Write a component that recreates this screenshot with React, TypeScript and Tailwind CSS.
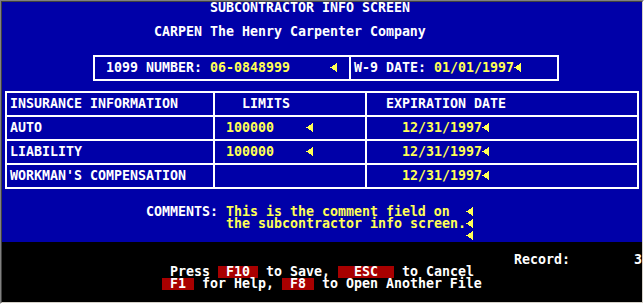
import React from "react";

const Arrow = () => (
  <svg width="8" height="12" viewBox="0 0 8 12" className="inline-block align-top" shapeRendering="crispEdges">
    <polygon points="0.5,5.5 7,1 7,10" fill="#ffff55" />
  </svg>
);

const Y = ({ children }: { children: React.ReactNode }) => <span className="text-[#ffff55]">{children}</span>;

const Key = ({ children }: { children: React.ReactNode }) => (
  <span className="inline-block h-3 align-top bg-[#a80000] text-white">{children}</span>
);

const Row = ({ className = "", children }: { className?: string; children?: React.ReactNode }) => (
  <div className={`h-3 whitespace-pre leading-[12px] ${className}`}>{children}</div>
);

export default function App() {
  return (
    <div
      className="w-[644px] h-[304px] border border-t-[#808080] border-l-[#808080] border-r-white border-b-white"
      style={{ fontFamily: '"DejaVu Sans Mono", monospace' }}
    >
      <div className="w-[642px] h-[302px] border border-t-[#404040] border-l-[#404040] border-r-[#d4d0c8] border-b-[#d4d0c8] flex flex-col text-[13.29px] font-bold text-white">
        <div className="h-[240px] bg-[#0000a8] flex flex-col">
          <Row className="pl-[208px]">SUBCONTRACTOR INFO SCREEN</Row>
          <Row />
          <Row className="pl-[152px]">CARPEN The Henry Carpenter Company</Row>
          <Row />
          <div className="ml-[91px] mt-[5px] w-[466px] h-[26px] border-2 border-white flex">
            <div className="w-[256px] border-r-2 border-white flex items-center pl-[11px]">
              <Row>
                1099 NUMBER: <Y>06-0848999     </Y>
                <Arrow />
              </Row>
            </div>
            <div className="flex-1 flex items-center pl-[3px]">
              <Row>
                W-9 DATE: <Y>01/01/1997</Y>
                <Arrow />
              </Row>
            </div>
          </div>
          <div className="ml-[3px] mt-[10px] w-[634px] border-2 border-white flex flex-col">
            {[
              { a: "INSURANCE INFORMATION", h: true },
              { a: "AUTO", l: true },
              { a: "LIABILITY", l: true },
              { a: "WORKMAN'S COMPENSATION", l: false },
            ].map((r, i) => (
              <div key={i} className={`flex ${i < 3 ? "h-[24px] border-b-2 border-white" : "h-[22px]"}`}>
                <div className="w-[208px] border-r-2 border-white flex items-center pl-[3px]">
                  <Row>{r.a}</Row>
                </div>
                <div className={`w-[152px] border-r-2 border-white flex items-center ${r.h ? "pl-[27px]" : "pl-[11px]"}`}>
                  {r.h ? (
                    <Row>LIMITS</Row>
                  ) : r.l ? (
                    <Row>
                      <Y>100000    </Y>
                      <Arrow />
                    </Row>
                  ) : null}
                </div>
                <div className={`flex-1 flex items-center ${r.h ? "pl-[19px]" : "pl-[35px]"}`}>
                  {r.h ? (
                    <Row>EXPIRATION DATE</Row>
                  ) : (
                    <Row>
                      <Y>12/31/1997</Y>
                      <Arrow />
                    </Row>
                  )}
                </div>
              </div>
            ))}
          </div>
          <div className="mt-[17px] flex flex-col">
            <Row className="pl-[144px]">
              COMMENTS: <Y>This is the comment field on  </Y>
              <Arrow />
            </Row>
            <Row className="pl-[224px]">
              <Y>the subcontractor info screen.</Y>
              <Arrow />
            </Row>
            <Row className="pl-[464px]">
              <Arrow />
            </Row>
          </div>
        </div>
        <div className="h-[60px] bg-black flex flex-col">
          <Row />
          <Row className="pl-[512px]">Record:        3</Row>
          <Row className="pl-[168px]">
            Press <Key> F10 </Key> to Save, <Key>  ESC  </Key> to Cancel
          </Row>
          <Row className="pl-[160px]">
            <Key> F1 </Key> for Help, <Key> F8 </Key> to Open Another File
          </Row>
          <Row />
        </div>
      </div>
    </div>
  );
}
